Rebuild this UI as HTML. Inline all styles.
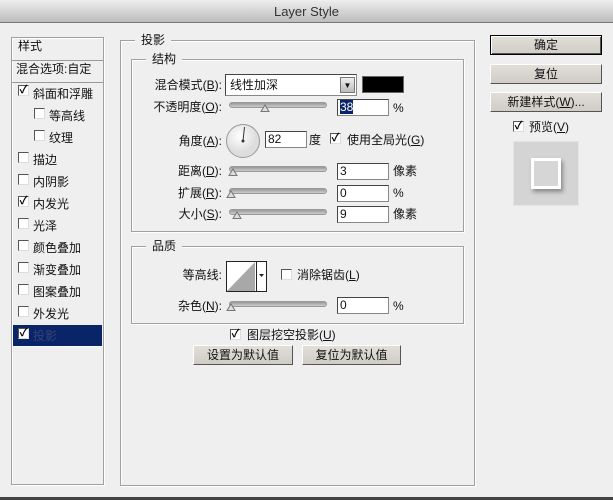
<!DOCTYPE html>
<html><head><meta charset="utf-8"><style>
*{margin:0;padding:0;box-sizing:border-box}
body{width:613px;height:500px;overflow:hidden;background:#efefef;font-family:"Liberation Sans","Noto Sans CJK SC","WenQuanYi Zen Hei",sans-serif;font-size:12px;color:#111;position:relative}
.a{position:absolute;white-space:nowrap;line-height:14px}
.r{text-align:right}
.box{position:absolute;border:1px solid #a0a0a0;box-shadow:1px 1px 0 #fff, inset 1px 1px 0 #fff}
.leg{position:absolute;background:#efefef;padding:0 6px;line-height:14px}
.inp{position:absolute;background:#fff;border:1px solid #888;border-top-color:#444;border-left-color:#444;height:17px;padding-left:2px;line-height:15px}
.sl{position:absolute;height:6px;background:linear-gradient(#999,#ccc);border-radius:3px;border:1px solid #999;width:98px}
.th{position:absolute;width:10px;height:8px;}
.cb{position:absolute;width:11px;height:11px;background:#fff;border:1px solid #555;border-right-color:#ddd;border-bottom-color:#ddd;font-size:11px;line-height:9px;text-align:center;font-weight:bold;color:#000}
.btn{position:absolute;background:linear-gradient(#e2dfd9,#d0cdc6);border:1px solid #fff;border-right-color:#555;border-bottom-color:#555;text-align:center;line-height:18px;height:20px}
.row{position:absolute;left:13px;width:89px;height:22px;border-bottom:1px solid #fafafa}
u{text-decoration:underline}
</style></head><body>
<div class="a" style="left:0;top:0;width:613px;height:23px;background:linear-gradient(#eeeeee,#bcbcbc);border-bottom:1px solid #777;text-align:center;line-height:23px;font-size:13px;color:#333">Layer Style</div>
<div class="a" style="left:0;top:497px;width:613px;height:3px;background:#444"></div>

<div class="box" style="left:11px;top:37px;width:93px;height:448px;background:#efefef"></div>
<div class="a" style="left:12px;top:60px;width:91px;height:1px;background:#999"></div>
<div class="a" style="left:12px;top:82px;width:91px;height:1px;background:#999"></div>
<div class="a" style="left:18px;top:39px">样式</div>
<div class="a" style="left:16px;top:62px">混合选项:自定</div>
<div class="row" style="top:325px;background:#0a2468"></div>
<div class="cb" style="left:18px;top:85px">✓</div><div class="a" style="left:33px;top:87px">斜面和浮雕</div>
<div class="cb" style="left:34px;top:108px"></div><div class="a" style="left:49px;top:109px">等高线</div>
<div class="cb" style="left:34px;top:130px"></div><div class="a" style="left:49px;top:131px">纹理</div>
<div class="cb" style="left:18px;top:152px"></div><div class="a" style="left:33px;top:153px">描边</div>
<div class="cb" style="left:18px;top:174px"></div><div class="a" style="left:33px;top:175px">内阴影</div>
<div class="cb" style="left:18px;top:196px">✓</div><div class="a" style="left:33px;top:197px">内发光</div>
<div class="cb" style="left:18px;top:218px"></div><div class="a" style="left:33px;top:219px">光泽</div>
<div class="cb" style="left:18px;top:240px"></div><div class="a" style="left:33px;top:241px">颜色叠加</div>
<div class="cb" style="left:18px;top:262px"></div><div class="a" style="left:33px;top:263px">渐变叠加</div>
<div class="cb" style="left:18px;top:284px"></div><div class="a" style="left:33px;top:285px">图案叠加</div>
<div class="cb" style="left:18px;top:306px"></div><div class="a" style="left:33px;top:307px">外发光</div>
<div class="cb" style="left:18px;top:328px">✓</div><div class="a" style="left:33px;top:329px;color:#33447a">投影</div>

<div class="box" style="left:120px;top:40px;width:355px;height:446px"></div>
<div class="leg" style="left:135px;top:33px">投影</div>
<div class="box" style="left:131px;top:59px;width:333px;height:173px"></div>
<div class="leg" style="left:146px;top:52px">结构</div>

<div class="a r" style="left:130px;width:92px;top:78px">混合模式(<u>B</u>):</div>
<div class="inp" style="left:225px;top:74px;width:132px;height:22px;line-height:20px;padding-left:4px">线性加深</div>
<div class="a" style="left:340px;top:77px;width:15px;height:16px;background:linear-gradient(#eee,#bbb);border:1px solid #777;text-align:center;font-size:8px;line-height:15px">▼</div>
<div class="a" style="left:362px;top:76px;width:42px;height:17px;background:#000;border:1px solid #666"></div>

<div class="a r" style="left:130px;width:92px;top:100px">不透明度(<u>O</u>):</div>
<div class="sl" style="left:229px;top:102px"></div>
<svg class="th" style="left:260px;top:104px" viewBox="0 0 10 8"><path d="M1 7.5 L5 1 L9 7.5Z" fill="#ddd" stroke="#777"/></svg>
<div class="inp" style="left:337px;top:99px;width:52px"><span style="background:#0a2468;color:#fff">38</span></div>
<div class="a" style="left:393px;top:101px">%</div>

<div class="a r" style="left:130px;width:92px;top:134px">角度(<u>A</u>):</div>
<svg class="a" style="left:225px;top:123px" width="36" height="36" viewBox="0 0 36 36"><defs><radialGradient id="g" cx="40%" cy="35%"><stop offset="0" stop-color="#fff"/><stop offset="1" stop-color="#ddd"/></radialGradient></defs><circle cx="18" cy="18" r="16.5" fill="url(#g)" stroke="#999"/><line x1="18" y1="18" x2="19.5" y2="4" stroke="#333" stroke-width="1"/><circle cx="18" cy="18" r="1.5" fill="#333"/></svg>
<div class="inp" style="left:265px;top:131px;width:42px">82</div>
<div class="a" style="left:309px;top:133px">度</div>
<div class="cb" style="left:330px;top:133px">✓</div>
<div class="a" style="left:347px;top:133px">使用全局光(<u>G</u>)</div>

<div class="a r" style="left:130px;width:92px;top:164px">距离(<u>D</u>):</div>
<div class="sl" style="left:229px;top:166px"></div>
<svg class="th" style="left:228px;top:168px" viewBox="0 0 10 8"><path d="M1 7.5 L5 1 L9 7.5Z" fill="#ddd" stroke="#777"/></svg>
<div class="inp" style="left:337px;top:163px;width:52px">3</div>
<div class="a" style="left:393px;top:164px">像素</div>

<div class="a r" style="left:130px;width:92px;top:186px">扩展(<u>R</u>):</div>
<div class="sl" style="left:229px;top:188px"></div>
<svg class="th" style="left:226px;top:190px" viewBox="0 0 10 8"><path d="M1 7.5 L5 1 L9 7.5Z" fill="#ddd" stroke="#777"/></svg>
<div class="inp" style="left:337px;top:185px;width:52px">0</div>
<div class="a" style="left:393px;top:186px">%</div>

<div class="a r" style="left:130px;width:92px;top:207px">大小(<u>S</u>):</div>
<div class="sl" style="left:229px;top:209px"></div>
<svg class="th" style="left:232px;top:211px" viewBox="0 0 10 8"><path d="M1 7.5 L5 1 L9 7.5Z" fill="#ddd" stroke="#777"/></svg>
<div class="inp" style="left:337px;top:206px;width:52px">9</div>
<div class="a" style="left:393px;top:207px">像素</div>

<div class="box" style="left:131px;top:246px;width:333px;height:78px"></div>
<div class="leg" style="left:146px;top:239px">品质</div>
<div class="a r" style="left:130px;width:92px;top:268px">等高线:</div>
<svg class="a" style="left:226px;top:261px" width="41" height="31" viewBox="0 0 41 31"><rect x="0.5" y="0.5" width="40" height="30" fill="#fff" stroke="#222"/><path d="M1 30 L29 1 L29 30Z" fill="#a8a8a8"/><line x1="30.5" y1="1" x2="30.5" y2="30" stroke="#222"/><path d="M33 13 L38 13 L35.5 16Z" fill="#222"/></svg>
<div class="cb" style="left:281px;top:269px"></div>
<div class="a" style="left:297px;top:268px">消除锯齿(<u>L</u>)</div>
<div class="a r" style="left:130px;width:92px;top:299px">杂色(<u>N</u>):</div>
<div class="sl" style="left:229px;top:301px"></div>
<svg class="th" style="left:226px;top:303px" viewBox="0 0 10 8"><path d="M1 7.5 L5 1 L9 7.5Z" fill="#ddd" stroke="#777"/></svg>
<div class="inp" style="left:337px;top:297px;width:52px">0</div>
<div class="a" style="left:393px;top:299px">%</div>

<div class="cb" style="left:230px;top:329px">✓</div>
<div class="a" style="left:247px;top:328px">图层挖空投影(<u>U</u>)</div>
<div class="btn" style="left:193px;top:345px;width:100px">设置为默认值</div>
<div class="btn" style="left:302px;top:345px;width:99px">复位为默认值</div>

<div class="btn" style="left:490px;top:35px;width:112px;border:1px solid #000;box-shadow:inset 1px 1px 0 #fff,inset -1px -1px 0 #555">确定</div>
<div class="btn" style="left:490px;top:64px;width:112px">复位</div>
<div class="btn" style="left:490px;top:92px;width:112px">新建样式(<u>W</u>)...</div>
<div class="cb" style="left:513px;top:121px">✓</div>
<div class="a" style="left:529px;top:120px">预览(<u>V</u>)</div>
<div class="a" style="left:513px;top:141px;width:66px;height:65px;background:#d4d4d4;border:1px solid #e4e4e4"></div>
<div class="a" style="left:531px;top:158px;width:30px;height:31px;background:#d6d6d6;border:3px solid #fff;box-shadow:2px 3px 4px rgba(0,0,0,.35)"></div>
</body></html>
